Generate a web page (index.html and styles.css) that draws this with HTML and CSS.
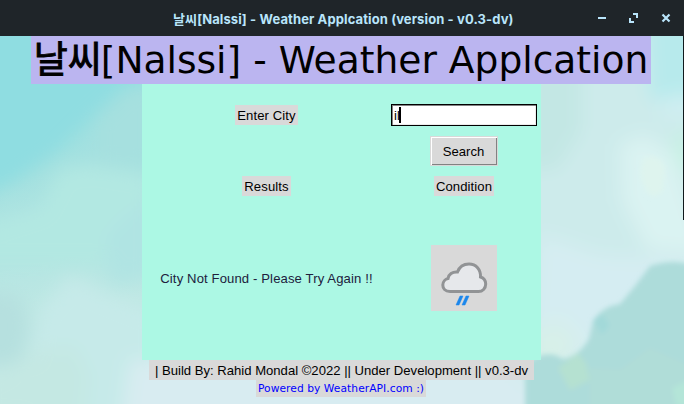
FILE: index.html
```
<!DOCTYPE html>
<html lang="en">
<head>
<meta charset="utf-8">
<title>날씨[Nalssi] - Weather Applcation</title>
<link rel="stylesheet" href="styles.css">
</head>
<body>
<header class="titlebar">
  <span class="window-title">날씨[Nalssi] - Weather Applcation (version - v0.3-dv)</span>
  <svg class="controls" width="80" height="16" viewBox="0 0 80 16" fill="#b9e5fb">
    <path d="M4 7h8v2H4zM39 3h5v5h-2V5h-3zM35 8h2v3h3v2h-5z"/>
    <path d="M68.500 4.500l7 7M75.500 4.500l-7 7" stroke="#b9e5fb" stroke-width="2.2"/>
  </svg>
</header>
<main class="app">
  <svg class="sky" viewBox="0 36 684 368" preserveAspectRatio="none" aria-hidden="true">
    <defs>
      <linearGradient id="base" x1="0" y1="0" x2=".35" y2="1">
        <stop offset="0" stop-color="#8cdde0"/><stop offset=".35" stop-color="#a5e1e0"/>
        <stop offset=".7" stop-color="#bfe8e4"/><stop offset="1" stop-color="#cdeaea"/>
      </linearGradient>
      <filter id="soft" x="-30%" y="-30%" width="160%" height="160%"><feGaussianBlur stdDeviation="9"/></filter>
      <filter id="edge"><feGaussianBlur stdDeviation="2.5"/></filter>
    </defs>
    <rect y="36" width="684" height="368" fill="url(#base)"/>
    <g filter="url(#soft)">
      <path d="M-30 0h190v80l-35 5-40 38-30 30-40 28-45 20z" fill="#8fdde1"/>
      <path d="M95 120l30-30 30-10v90l-60-5z" fill="#a6e0df"/>
      <path d="M-30 230l70-22 20-38 30-5 62 10v90H-30z" fill="#b2e8e2"/>
      <path d="M105 235l20-20 30-20v80l-45 10z" fill="#b0e4e3"/>
      <path d="M-30 290l50 5 10 30-10 40h-50z" fill="#b6e0df"/>
      <path d="M40 310l30-35 40 20 50 20v115H20z" fill="#c6eae9"/>
      <path d="M40 350l35-5 15 30-5 45H-20v-40z" fill="#c4e8e3"/>
      <path d="M130 360h430v70H120z" fill="#d8ecf1"/>
      <path d="M520 20h200v360H520z" fill="#cdebeb"/>
      <path d="M645 10h70v95l-65-5z" fill="#b7eaec"/>
      <path d="M520 70h62v60l-25 40h-37z" fill="#c3e7e4"/>
      <path d="M620 145l25-10 30 20 32 100-60-5-25-50z" fill="#daf3f2"/>
      <path d="M540 235l60 20 110 5v40l-120 60h-60z" fill="#d5edf2"/>
      <path d="M530 330l30-10 20 20-15 30h-35z" fill="#d7f0e9"/>
      <path d="M670 138l26-10v50l-18-10z" fill="#c8f1e4"/>
      <path d="M660 98l35-5v25h-30z" fill="#cfeef2"/>
    </g>
    <g filter="url(#edge)">
      <path d="M643 158q18-5 22 10l-2 22q-10 13-18-2-8-14-2-30z" fill="#def4ee"/>
      <path d="M525 365q20-18 38-6 15-2 26-20l4-18q10-15 27-17l15-18 15-20q25-8 45 0v150H525z" fill="#addcda"/>
      <path d="M593 320l9-6 8 11-8 10z" fill="#a3d9d9"/>
      <path d="M558 368l20-15 8 10 4 17-20 10z" fill="#b5e1d1"/>
      <path d="M590 368l30 2 30-22 44 20v60H590z" fill="#b0ddd8"/>
      <path d="M672 388l20-10v28h-16z" fill="#b4e5d8"/>
    </g>
    <path d="M683 36h1v184h-1z" fill="#10191c"/>
  </svg>
  <h1 class="heading"><span class="ko">날씨</span><span>[Nalssi] - Weather Applcation</span></h1>
  <section class="panel">
    <span class="label">Enter City</span>
    <div class="entry"><span>il</span><i class="caret"></i></div>
    <button class="search">Search</button>
    <span class="label">Results</span>
    <span class="label">Condition</span>
    <span class="message">City Not Found - Please Try Again !!</span>
    <div class="icon">
      <svg width="66" height="66" viewBox="0 0 66 66">
        <path d="M19 46.500C14 46.500 11.800 43.500 11.800 40C11.800 36.500 14.500 34 17 33.500C17.500 29.500 21.500 26.500 26.500 27C28.500 21.500 33 19 38 19C45 19 50 24.500 49.500 32C52.500 33 54.700 35.500 54.700 39C54.700 43.500 51.500 46.500 47.500 46.500Z" fill="#e6e8eb" stroke="#919395" stroke-width="3"/>
        <path d="M29 51h3l-4 9h-3zM35 51h3l-4 9h-3z" fill="#1b87ec" stroke="#1b87ec" stroke-width=".5"/>
      </svg>
    </div>
  </section>
  <footer class="credits">| Build By: Rahid Mondal ©2022 || Under Development || v0.3-dv</footer>
  <a class="powered">Powered by WeatherAPI.com :)</a>
</main>
</body>
</html>
```
FILE: styles.css
```
body {
  margin: 0;
  width: 684px;
  height: 404px;
  overflow: hidden;
  font: 13.1px/20px "Liberation Sans", "Noto Sans CJK KR", sans-serif;
  color: #000;
}
.titlebar {
  box-sizing: border-box;
  height: 36px;
  padding: 2px 10px 0 173px;
  display: flex;
  align-items: center;
  justify-content: space-between;
  background: #1f2529;
}
.window-title {
  font: bold 13px/20px Inter, "Noto Sans CJK KR", sans-serif;
  letter-spacing: 0.11px;
  color: #b9e5fb;
  white-space: nowrap;
}
.controls { display: block; margin-bottom: 2px; }
.app {
  position: relative;
  z-index: 0;
  height: 368px;
  display: flex;
  flex-direction: column;
  align-items: center;
}
.sky {
  position: absolute;
  inset: 0;
  width: 100%;
  height: 100%;
  z-index: -1;
}
.heading {
  width: 620px;
  height: 48px;
  margin: 0 2px 0 0;
  display: flex;
  align-items: center;
  justify-content: center;
  background: #bbb5f0;
  font: 37.6px/48px "DejaVu Sans", sans-serif;
  white-space: nowrap;
}
.ko {
  margin: 0 -1px 5px 0;
  font: 400 37px/43px "Noto Sans CJK KR", sans-serif;
  -webkit-text-stroke: 0.9px #000;
}
.panel {
  box-sizing: border-box;
  width: 399px;
  height: 276px;
  margin-right: 1px;
  padding: 20px 4px 0 0;
  display: grid;
  grid-template-columns: 249px 146px;
  grid-template-rows: 22px 50px 20px 163px;
  align-items: center;
  justify-items: center;
  background: #acf8e4;
}
.label {
  box-sizing: border-box;
  height: 20px;
  padding: 1px 2px 0;
  background: #d9d9d9;
  letter-spacing: 0.1px;
}
.entry {
  box-sizing: border-box;
  width: 146px;
  height: 22px;
  display: flex;
  align-items: center;
  padding: 1px 0 0 2px;
  border: 1px solid #000;
  box-shadow: inset 1px 1px #828282, inset -1px -1px #ececec;
  background: #fff;
}
.caret { width: 2px; height: 16px; margin: -1px 0 0 -1px; background: #000; }
.search {
  grid-column: 2;
  box-sizing: border-box;
  width: 68px;
  height: 30px;
  margin: 0 1px 0 0;
  padding: 2px 0 0;
  font: inherit;
  color: #000;
  background: #d9d9d9;
  border: 1px solid #d9d9d9;
  box-shadow: inset 1px 1px #fff, inset -1px -1px #828282;
}
.message { color: #20203c; margin-top: 2px; letter-spacing: 0.12px; }
.icon { width: 66px; height: 66px; background: #d9d9d9; }
.icon svg { display: block; }
.credits {
  box-sizing: border-box;
  width: 385px;
  height: 20px;
  padding-top: 1px;
  margin-right: 1px;
  text-align: center;
  background: #d9d9d9;
  white-space: nowrap;
}
.powered {
  width: 170px;
  height: 17px;
  margin-right: 2px;
  background: #d9d9d9;
  color: #00f;
  text-align: center;
  font: 10.7px/17px "DejaVu Sans", sans-serif;
  letter-spacing: 0.05px;
  white-space: nowrap;
}
```
